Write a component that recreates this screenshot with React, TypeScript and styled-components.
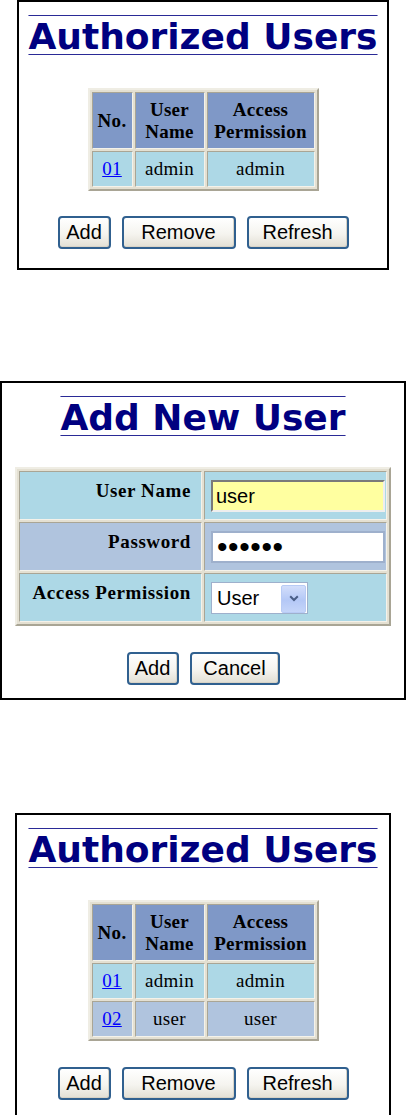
import React from 'react';
import styled, { createGlobalStyle } from 'styled-components';

type Tone = 'light' | 'steel';

type UserRow = {
  no: string;
  name: string;
  permission: string;
  tone: Tone;
};

const toneColor: Record<Tone, string> = {
  light: '#add8e6',
  steel: '#b0c4de',
};

const GlobalStyle = createGlobalStyle`
  html, body {
    margin: 0;
    padding: 0;
    background: #fff;
  }
  body {
    font-family: 'Liberation Serif', 'Times New Roman', serif;
  }
`;

const Page = styled.div`
  width: 406px;
  display: flex;
  flex-direction: column;
  align-items: center;
`;

const Panel = styled.section<{ $width: number; $spaceAbove: number; $padBottom: number }>`
  box-sizing: border-box;
  width: ${({ $width }) => $width}px;
  margin-top: ${({ $spaceAbove }) => $spaceAbove}px;
  padding: 14px 0 ${({ $padBottom }) => $padBottom}px;
  border: 2px solid #000;
  display: flex;
  flex-direction: column;
  align-items: center;
`;

const Title = styled.h1`
  margin: 0;
  font-family: 'DejaVu Sans', Verdana, sans-serif;
  font-weight: bold;
  font-size: 36px;
  line-height: 42px;
  color: #000080;
  white-space: nowrap;
  text-decoration: underline overline;
  text-decoration-color: #2a2a96;
  text-decoration-thickness: 1px;
  text-underline-offset: 5px;
`;

const GridTable = styled.table<{ $spaceAbove: number }>`
  margin-top: ${({ $spaceAbove }) => $spaceAbove}px;
  border-collapse: separate;
  border-spacing: 2px;
  border: 2px solid;
  border-color: #efede4 #a9a595 #a9a595 #efede4;
  background: #e4e0d2;
  font-size: 19px;
  letter-spacing: 0.3px;
  color: #000;
`;

const HeadCell = styled.th<{ $width: number }>`
  box-sizing: border-box;
  width: ${({ $width }) => $width}px;
  height: 57px;
  padding: 0 2px;
  background: #7f98c7;
  font-weight: bold;
  line-height: 22px;
  text-align: center;
  border: 1px solid;
  border-color: #a9a595 #f4f2ea #f4f2ea #a9a595;
`;

const DataCell = styled.td<{ $tone: Tone }>`
  box-sizing: border-box;
  height: 36px;
  padding: 0 2px;
  background: ${({ $tone }) => toneColor[$tone]};
  line-height: 22px;
  text-align: center;
  border: 1px solid;
  border-color: #a9a595 #f4f2ea #f4f2ea #a9a595;
`;

const NumberLink = styled.a`
  color: #0000ff;
  text-decoration: underline;
`;

const LabelCell = styled.th<{ $tone: Tone }>`
  box-sizing: border-box;
  width: 183px;
  height: 49px;
  padding: 8px 10px 0 0;
  background: ${({ $tone }) => toneColor[$tone]};
  font-weight: bold;
  line-height: 22px;
  letter-spacing: 0.6px;
  text-align: right;
  vertical-align: top;
  white-space: nowrap;
  border: 1px solid;
  border-color: #a9a595 #f4f2ea #f4f2ea #a9a595;
`;

const FieldCell = styled.td<{ $tone: Tone }>`
  box-sizing: border-box;
  width: 183px;
  height: 49px;
  padding: 0 0 0 6px;
  background: ${({ $tone }) => toneColor[$tone]};
  vertical-align: middle;
  letter-spacing: 0;
  border: 1px solid;
  border-color: #a9a595 #f4f2ea #f4f2ea #a9a595;
`;

const TextField = styled.input<{ $highlight?: boolean }>`
  box-sizing: border-box;
  display: block;
  width: 174px;
  height: 32px;
  margin: 0;
  padding: 1px 3px 0;
  font-family: 'Liberation Sans', Arial, sans-serif;
  font-size: 20px;
  color: #000;
  outline: none;
  background: ${({ $highlight }) => ($highlight ? '#ffffa0' : '#fff')};
  border: 2px solid;
  border-color: ${({ $highlight }) =>
    $highlight ? '#7a7a7a #eeeeee #eeeeee #7a7a7a' : '#9eb0cc'};

  &[type='password'] {
    font-size: 30px;
    letter-spacing: 0.6px;
    padding-left: 4px;
  }
`;

const SelectBox = styled.div`
  position: relative;
  width: 97px;
  height: 32px;
`;

const Select = styled.select`
  box-sizing: border-box;
  width: 100%;
  height: 100%;
  margin: 0;
  padding: 0 0 0 5px;
  appearance: none;
  font-family: 'Liberation Sans', Arial, sans-serif;
  font-size: 20px;
  color: #000;
  background: #fff;
  border: 1px solid #9eb0cc;
  border-radius: 0;
  outline: none;
`;

const SelectArrow = styled.span`
  position: absolute;
  top: 3px;
  right: 2px;
  width: 23px;
  height: 26px;
  display: flex;
  align-items: center;
  justify-content: center;
  border: 1px solid #b8cbf5;
  border-radius: 2px;
  background: linear-gradient(#d3defb, #b4c8f6 55%, #c5d5f9);
  pointer-events: none;
`;

const ButtonRow = styled.div<{ $spaceAbove: number }>`
  display: flex;
  gap: 11px;
  margin-top: ${({ $spaceAbove }) => $spaceAbove}px;
`;

const PushButton = styled.button<{ $width: number }>`
  box-sizing: border-box;
  width: ${({ $width }) => $width}px;
  height: 33px;
  margin: 0;
  padding: 0 0 1px;
  border: 2px solid #30608f;
  border-radius: 4px;
  background: linear-gradient(#ffffff, #f5f4ef 55%, #e2dfd4);
  box-shadow: inset -1px -1px 0 #d8d3c6;
  font-family: 'Liberation Sans', Arial, sans-serif;
  font-size: 20px;
  color: #000;
`;

type UsersPanelProps = {
  users: UserRow[];
  width: number;
  spaceAbove: number;
  padBottom: number;
  tableGap: number;
  buttonGap: number;
};

const UsersPanel: React.FC<UsersPanelProps> = ({
  users, width, spaceAbove, padBottom, tableGap, buttonGap,
}) => (
  <Panel $width={width} $spaceAbove={spaceAbove} $padBottom={padBottom}>
    <Title>Authorized Users</Title>
    <GridTable $spaceAbove={tableGap}>
      <thead>
        <tr>
          <HeadCell $width={41}>No.</HeadCell>
          <HeadCell $width={70}>User<br />Name</HeadCell>
          <HeadCell $width={108}>Access<br />Permission</HeadCell>
        </tr>
      </thead>
      <tbody>
        {users.map((user) => (
          <tr key={user.no}>
            <DataCell $tone={user.tone}><NumberLink href="#">{user.no}</NumberLink></DataCell>
            <DataCell $tone={user.tone}>{user.name}</DataCell>
            <DataCell $tone={user.tone}>{user.permission}</DataCell>
          </tr>
        ))}
      </tbody>
    </GridTable>
    <ButtonRow $spaceAbove={buttonGap}>
      <PushButton $width={53}>Add</PushButton>
      <PushButton $width={114}>Remove</PushButton>
      <PushButton $width={102}>Refresh</PushButton>
    </ButtonRow>
  </Panel>
);

const AddUserPanel: React.FC = () => (
  <Panel $width={406} $spaceAbove={111} $padBottom={13}>
    <Title>Add New User</Title>
    <GridTable $spaceAbove={28}>
      <tbody>
        <tr>
          <LabelCell $tone="light">User Name</LabelCell>
          <FieldCell $tone="light">
            <TextField $highlight type="text" defaultValue="user" />
          </FieldCell>
        </tr>
        <tr>
          <LabelCell $tone="steel">Password</LabelCell>
          <FieldCell $tone="steel">
            <TextField type="password" defaultValue="secret" />
          </FieldCell>
        </tr>
        <tr>
          <LabelCell $tone="light">Access Permission</LabelCell>
          <FieldCell $tone="light">
            <SelectBox>
              <Select defaultValue="user">
                <option value="user">User</option>
                <option value="admin">Admin</option>
              </Select>
              <SelectArrow>
                <svg width="10" height="7" viewBox="0 0 10 7">
                  <path d="M1.2 1.2 L5 5 L8.8 1.2" fill="none" stroke="#4a5e86" strokeWidth="2" />
                </svg>
              </SelectArrow>
            </SelectBox>
          </FieldCell>
        </tr>
      </tbody>
    </GridTable>
    <ButtonRow $spaceAbove={26}>
      <PushButton $width={52}>Add</PushButton>
      <PushButton $width={90}>Cancel</PushButton>
    </ButtonRow>
  </Panel>
);

const before: UserRow[] = [
  { no: '01', name: 'admin', permission: 'admin', tone: 'light' },
];

const after: UserRow[] = [
  { no: '01', name: 'admin', permission: 'admin', tone: 'light' },
  { no: '02', name: 'user', permission: 'user', tone: 'steel' },
];

export default function App() {
  return (
    <Page>
      <GlobalStyle />
      <UsersPanel users={before} width={372} spaceAbove={0} padBottom={19} tableGap={30} buttonGap={25} />
      <AddUserPanel />
      <UsersPanel users={after} width={376} spaceAbove={113} padBottom={15} tableGap={29} buttonGap={26} />
    </Page>
  );
}
